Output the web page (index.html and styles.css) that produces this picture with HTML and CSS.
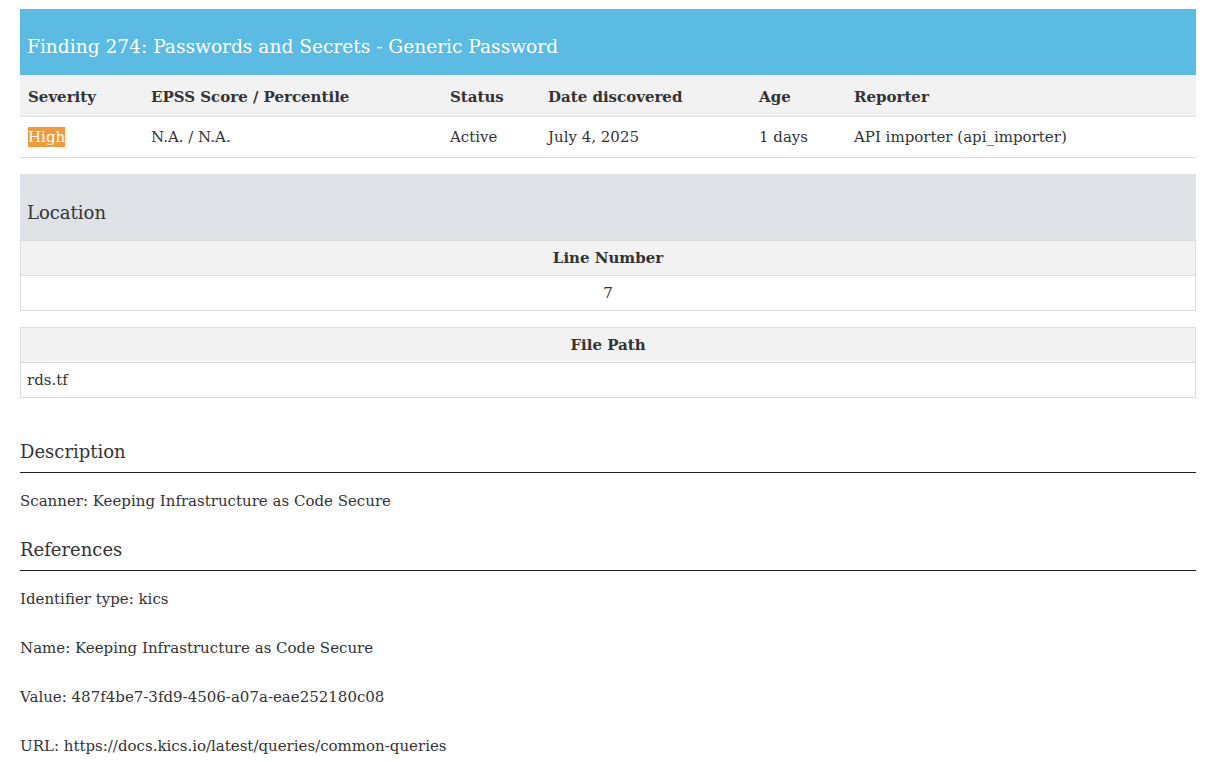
FILE: index.html
```html
<!DOCTYPE html>
<html lang="en">
<head>
    <meta charset="UTF-8">
    <title>Finding 274</title>
    <link rel="stylesheet" href="styles.css">
</head>
<body>
    <div class="page">
        <div class="finding">
            <h3 class="finding-title">Finding 274: Passwords and Secrets - Generic Password</h3>
            <table class="summary">
                <thead>
                    <tr>
                        <th class="col-sev">Severity</th>
                        <th class="col-epss">EPSS Score / Percentile</th>
                        <th class="col-status">Status</th>
                        <th class="col-date">Date discovered</th>
                        <th class="col-age">Age</th>
                        <th>Reporter</th>
                    </tr>
                </thead>
                <tbody>
                    <tr>
                        <td><span class="sev-high">High</span></td>
                        <td>N.A. / N.A.</td>
                        <td>Active</td>
                        <td>July 4, 2025</td>
                        <td>1 days</td>
                        <td>API importer (api_importer)</td>
                    </tr>
                </tbody>
            </table>
        </div>

        <div class="location">
            <h4 class="location-title">Location</h4>
            <table class="loc-table">
                <tr><th>Line Number</th></tr>
                <tr><td class="center">7</td></tr>
            </table>
        </div>
        <table class="loc-table">
            <tr><th>File Path</th></tr>
            <tr><td>rds.tf</td></tr>
        </table>

        <h4 class="section-title">Description</h4>
        <p class="section-text">Scanner: Keeping Infrastructure as Code Secure</p>

        <h4 class="section-title">References</h4>
        <p class="section-text">Identifier type: kics</p>
        <p class="section-text">Name: Keeping Infrastructure as Code Secure</p>
        <p class="section-text">Value: 487f4be7-3fd9-4506-a07a-eae252180c08</p>
        <p class="section-text">URL: https://docs.kics.io/latest/queries/common-queries</p>
    </div>
</body>
</html>
```

FILE: styles.css
```css
*{
    margin: 0;
    padding: 0;
    box-sizing: border-box;
}
body{
    font-family: "Roboto Slab", "DejaVu Serif", serif;
    font-size: 15px;
    color: #333;
    background: #fff;
}
.page{
    width: 1176px;
    margin: 9px 0 0 20px;
}
.finding-title{
    background: #5bbbe3;
    color: #fff;
    font-weight: 400;
    font-size: 18.6px;
    height: 66px;
    padding: 27px 7px 0;
}
table{
    width: 100%;
    border-collapse: collapse;
}
.summary th{
    background: #f2f2f2;
    text-align: left;
    font-weight: 700;
    height: 41px;
    padding: 3px 8px 0;
    border-bottom: 1px solid #ddd;
}
.summary td{
    height: 41px;
    padding: 1px 8px 0;
    border-bottom: 1px solid #ddd;
}
.col-sev{ width: 123px; }
.col-epss{ width: 299px; }
.col-status{ width: 98px; }
.col-date{ width: 211px; }
.col-age{ width: 95px; }
.sev-high{
    background: #ef9a3b;
    color: #fff;
    padding: 1px 0;
}
.location{
    margin-top: 16px;
}
.location-title{
    background: #dee1e6;
    font-weight: 400;
    font-size: 18px;
    height: 66px;
    padding: 28px 7px 0;
}
.loc-table{
    border: 1px solid #ddd;
    margin-bottom: 16px;
}
.loc-table th{
    background: #f2f2f2;
    font-weight: 700;
    height: 35px;
    border-bottom: 1px solid #ddd;
}
.loc-table td{
    height: 35px;
    padding: 0 6px;
}
.loc-table td.center{
    text-align: center;
}
.section-title{
    font-weight: 400;
    font-size: 18px;
    margin-top: 43px;
    padding-bottom: 10px;
    border-bottom: 1px solid #222;
}
.section-text + .section-title{
    margin-top: 27px;
}
.section-text{
    margin-top: 18px;
    line-height: 21px;
}
.section-text + .section-text{
    margin-top: 28px;
}
```
